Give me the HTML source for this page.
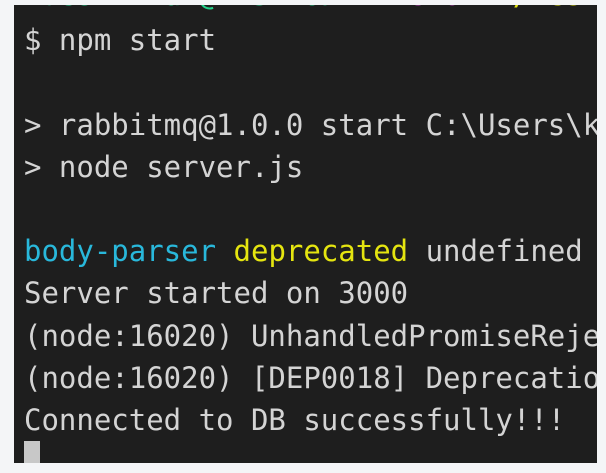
<!DOCTYPE html>
<html><head><style>
html,body{margin:0;padding:0;background:#f4f5f7;width:606px;height:473px;overflow:hidden}
.term{position:absolute;left:14px;top:5px;width:583px;height:458px;background:#1e1e1e;overflow:hidden}
.t{position:absolute;left:10px;top:-28px;font-family:"DejaVu Sans Mono","Liberation Mono",monospace;font-size:29px;line-height:42.2px;color:#d4d4d4;white-space:pre;letter-spacing:0}
.g{color:#23d18b}.p{color:#bc3fbc}.y{color:#e5e510}.c{color:#29b8db}
.first{position:relative;top:-3px}
.cur{position:absolute;left:10px;top:436px;width:16px;height:24px;background:#c8c8c8}
</style></head><body>
<div class="term">
<div class="t"><span class="first"><span class="g">kdeshikhan@DESKTOP</span> <span class="p">MINGW64</span> <span class="y">~/Desktop</span></span>
$ npm start

&gt; rabbitmq@1.0.0 start C:\Users\kdeshikhan
&gt; node server.js

<span class="c">body-parser</span> <span class="y">deprecated</span> undefined extended
Server started on 3000
(node:16020) UnhandledPromiseRejectionWarning
(node:16020) [DEP0018] DeprecationWarning
Connected to DB successfully!!!</div>
<div class="cur"></div>
</div>
</body></html>
